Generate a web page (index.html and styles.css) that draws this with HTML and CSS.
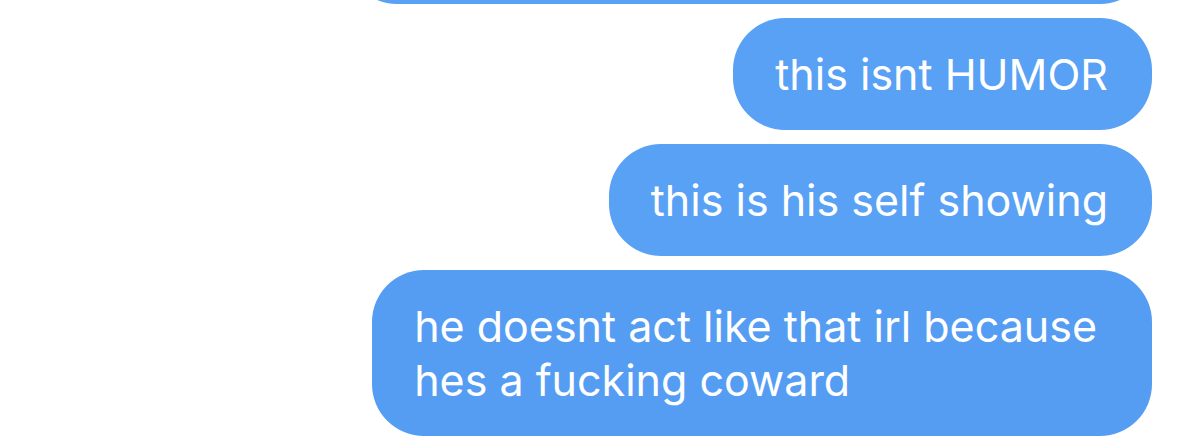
FILE: index.html
```html
<!DOCTYPE html>
<html lang="en">
<head>
    <meta charset="UTF-8">
    <meta name="viewport" content="width=device-width, initial-scale=1.0">
    <title>Messages</title>
    <link rel="stylesheet" href="styles.css">
</head>
<body>
    <div class="thread">
        <div class="bubble bubble-cut">&nbsp;</div>
        <div class="bubble">this isnt HUMOR</div>
        <div class="bubble">this is his self showing</div>
        <div class="bubble bubble-wide">he doesnt act like that irl because<br>hes a fucking coward</div>
    </div>
</body>
</html>
```

FILE: styles.css
```css
body {
    margin: 0;
    background-color: #ffffff;
    font-family: "Inter", "Liberation Sans", sans-serif;
    overflow: hidden;
}
.thread {
    display: flex;
    flex-direction: column;
    align-items: flex-end;
    gap: 14px;
    padding-right: 48px;
}
.bubble {
    background-color: #58a1f5;
    color: #ffffff;
    font-size: 43px;
    line-height: 54px;
    padding: 29px 44px 29px 42px;
    border-radius: 52px;
    box-sizing: border-box;
}
.bubble-cut {
    width: 807px;
    margin-top: -108px;
}
.bubble-wide {
    padding-right: 55px;
    padding-left: 42px;
    background-color: #559df3;
}
```
